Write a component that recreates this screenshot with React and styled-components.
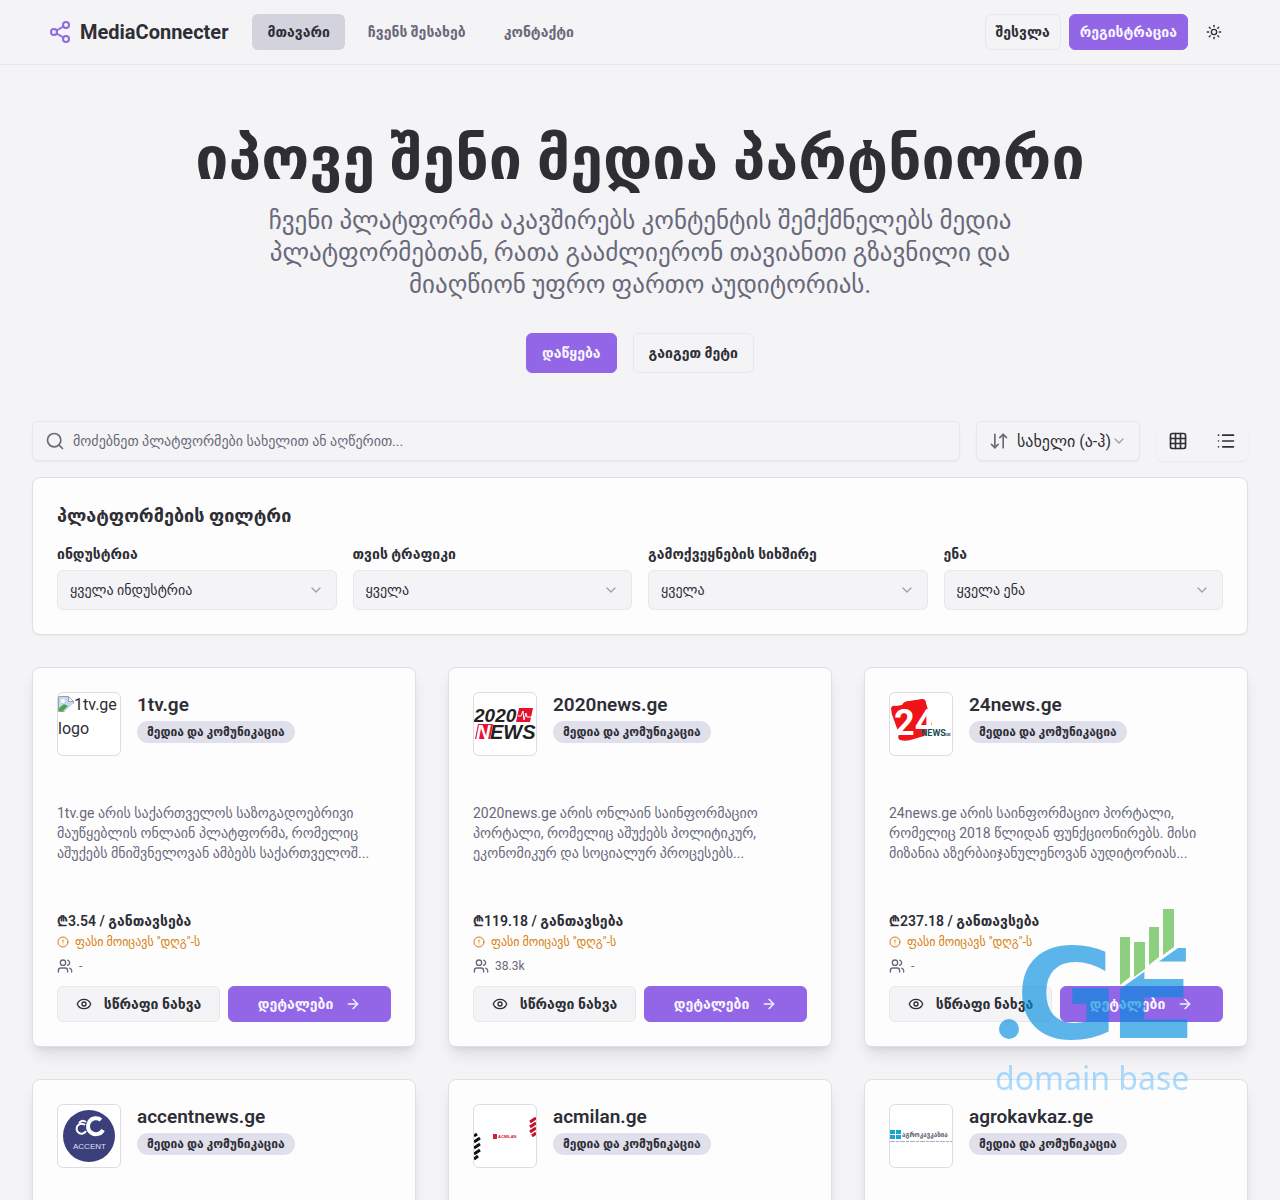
import React from 'react';
import styled, { createGlobalStyle, css } from 'styled-components';
import {
  Share2, Sun, Search, ArrowDownUp, ChevronDown, Grid3x3, List, Eye, ArrowRight, Users, CircleAlert,
} from 'lucide-react';

const c = {
  bg: '#f4f4f7',
  card: '#fdfdfe',
  line: '#e8e8ec',
  ink: '#2e2e35',
  muted: '#69697a',
  primary: '#9266e6',
  badge: '#e0e0ec',
  amber: '#d97f0b',
};

const Global = createGlobalStyle`
  *, *::before, *::after { box-sizing: border-box; }
  body { margin: 0; background: ${c.bg}; }
  body, button, input, select {
    font-family: Roboto, 'DejaVu Sans', sans-serif;
    color: ${c.ink};
  }
  h1, h2, h3, p { margin: 0; }
`;

const Page = styled.div`
  height: 100vh;
  overflow: hidden;
`;

const Header = styled.header`
  display: flex;
  align-items: center;
  height: 65px;
  padding: 0 48px;
  border-bottom: 1px solid ${c.line};
`;

const Brand = styled.a`
  display: flex;
  align-items: center;
  gap: 8px;
  margin-right: 24px;
  color: ${c.ink};
  font-size: 20px;
  font-weight: 700;
  line-height: 28px;
  text-decoration: none;
  svg { color: ${c.primary}; }
`;

const Nav = styled.nav`
  display: flex;
  gap: 8px;
  flex: 1;
`;

const NavLink = styled.a`
  display: flex;
  align-items: center;
  height: 36px;
  padding: 0 15px;
  border-radius: 6px;
  font-size: 14px;
  font-weight: 600;
  text-decoration: none;
  color: ${(p) => (p.$active ? c.ink : c.muted)};
  background: ${(p) => (p.$active ? '#d3d3de' : 'transparent')};
`;

const Actions = styled.div`
  display: flex;
  align-items: center;
  gap: 8px;
`;

const kinds = {
  primary: css`
    background: ${c.primary};
    border-color: ${c.primary};
    color: #f8f5ff;
  `,
  outline: css`
    background: ${c.bg};
    border-color: ${c.line};
  `,
  ghost: css`
    background: transparent;
    border-color: transparent;
  `,
};

const Button = styled.button`
  display: inline-flex;
  align-items: center;
  justify-content: center;
  gap: 12px;
  height: ${(p) => (p.$large ? 40 : 36)}px;
  padding: 0 ${(p) => (p.$large ? 15 : 10)}px;
  border: 1px solid;
  border-radius: 6px;
  font-size: 14px;
  font-weight: 600;
  white-space: nowrap;
  cursor: pointer;
  ${(p) => kinds[p.$kind]}
`;

const IconButton = styled(Button)`
  width: ${(p) => (p.$large ? 40 : 36)}px;
  padding: 0;
`;

const Hero = styled.section`
  display: flex;
  flex-direction: column;
  align-items: center;
  padding: 64px 32px 48px;
  text-align: center;
`;

const HeroTitle = styled.h1`
  font-size: 59px;
  font-weight: 700;
  line-height: 60px;
`;

const HeroText = styled.p`
  max-width: 768px;
  margin: 16px 0 32px;
  font-size: 25px;
  line-height: 32px;
  color: ${c.muted};
  white-space: pre-line;
`;

const HeroActions = styled.div`
  display: flex;
  gap: 16px;
`;

const Main = styled.main`
  padding: 0 32px;
`;

const Toolbar = styled.div`
  display: flex;
  gap: 16px;
  margin-bottom: 16px;
`;

const Field = styled.div`
  display: flex;
  align-items: center;
  height: 40px;
  padding: 0 12px;
  border: 1px solid ${c.line};
  border-radius: 6px;
  background: ${c.bg};
  box-shadow: ${(p) => (p.$raised ? '0 1px 2px rgba(0, 0, 0, 0.05)' : 'none')};
  flex: ${(p) => (p.$grow ? 1 : 'none')};
  > svg { flex: none; color: ${c.muted}; }
  > svg:first-child { margin-right: 8px; }
`;

const SearchInput = styled.input`
  flex: 1;
  min-width: 0;
  height: 100%;
  padding: 0;
  border: 0;
  outline: 0;
  background: transparent;
  font-size: 14px;
  &::placeholder { color: ${c.muted}; opacity: 1; }
`;

const SelectControl = styled.select`
  appearance: none;
  flex: 1;
  min-width: 0;
  height: 100%;
  padding: 0;
  border: 0;
  outline: 0;
  background: transparent;
  font-size: ${(p) => p.$size}px;
`;

const Chevron = styled(ChevronDown)`
  opacity: 0.6;
  pointer-events: none;
`;

const ViewToggle = styled.div`
  display: flex;
  gap: 8px;
  padding: 0 2px;
  border-radius: 6px;
  box-shadow: 0 1px 2px rgba(0, 0, 0, 0.05);
`;

const FilterPanel = styled.section`
  margin-bottom: 32px;
  padding: 24px;
  border: 1px solid #dfdfe5;
  border-radius: 8px;
  background: ${c.card};
  box-shadow: 0 1px 2px rgba(0, 0, 0, 0.05);
`;

const FilterTitle = styled.h2`
  margin-bottom: 16px;
  font-size: 18px;
  font-weight: 700;
  line-height: 28px;
`;

const FilterGrid = styled.div`
  display: grid;
  grid-template-columns: repeat(4, 1fr);
  gap: 16px;
`;

const FilterItem = styled.div`
  display: grid;
  gap: 8px;
`;

const FilterLabel = styled.label`
  font-size: 14px;
  font-weight: 600;
  line-height: 16px;
`;

const CardGrid = styled.div`
  display: grid;
  grid-template-columns: repeat(3, 1fr);
  gap: 32px;
`;

const Card = styled.article`
  display: flex;
  flex-direction: column;
  min-width: 0;
  min-height: 380px;
  padding: 24px;
  border: 1px solid #dfdfe5;
  border-radius: 8px;
  background: ${c.card};
  box-shadow: 0 10px 15px -3px rgba(0, 0, 0, 0.1), 0 4px 6px -4px rgba(0, 0, 0, 0.1);
`;

const CardHead = styled.div`
  display: flex;
  gap: 16px;
  margin-bottom: 47px;
`;

const LogoBox = styled.div`
  flex: none;
  width: 64px;
  height: 64px;
  overflow: hidden;
  border: 1px solid #dcdce2;
  border-radius: 6px;
  background: #fff;
  font-size: 16px;
  line-height: 24px;
  > svg { display: block; }
`;

const MissingImage = styled.span`
  svg { vertical-align: -2px; }
`;

const CardName = styled.h3`
  margin-bottom: 4px;
  font-size: 19px;
  font-weight: 600;
  line-height: 25px;
`;

const Badge = styled.span`
  display: flex;
  align-items: center;
  width: fit-content;
  height: 22px;
  padding: 0 10px;
  border-radius: 11px;
  background: ${c.badge};
  font-size: 12px;
  font-weight: 600;
  white-space: nowrap;
`;

const Description = styled.p`
  margin-bottom: 48px;
  font-size: 14px;
  line-height: 20px;
  color: ${c.muted};
  white-space: pre;
`;

const Price = styled.p`
  margin-bottom: 3px;
  font-size: 14px;
  font-weight: 600;
  line-height: 20px;
`;

const Meta = styled.p`
  display: flex;
  align-items: center;
  gap: 6px;
  margin-bottom: ${(p) => (p.$vat ? 8 : 12)}px;
  font-size: 12px;
  line-height: 16px;
  color: ${(p) => (p.$vat ? c.amber : c.muted)};
`;

const CardActions = styled.div`
  display: grid;
  grid-template-columns: 1fr 1fr;
  gap: 8px;
`;

const Watermark = styled.svg`
  position: fixed;
  right: 80px;
  bottom: 94px;
  pointer-events: none;
`;

function BrokenImage() {
  return (
    <MissingImage>
      <svg width="16" height="16" viewBox="0 0 16 16">
        <path d="M.5.5h10l5 5v10H.5z" fill="#c6d9f4" stroke="#9aa0a6" />
        <path d="M10.500.5v5h5z" fill="#fff" stroke="#9aa0a6" />
        <circle cx="5" cy="5" r="2" fill="#fff" />
        <path d="M1 15v-3l5-4 4 2-5 5z" fill="#4ca64c" />
        <path d="M6 16l10-9v9z" fill="#fff" />
      </svg>
      1tv.ge logo
    </MissingImage>
  );
}

const heavy = { fontFamily: 'Liberation Sans, sans-serif', fontWeight: 700 };

function News2020() {
  return (
    <svg width="62" height="62" viewBox="0 0 62 62" {...heavy} fontStyle="italic">
      <text x="0" y="29" fontSize="19" fill="#222">2020</text>
      <path d="M45 15h14l-3 14H42z" fill="#e4122d" />
      <path d="M44 23h3l2-5 1 9 2-7 1 4h4" fill="none" stroke="#fff" />
      <path d="M4 31h15l-3 15H1z" fill="#e4122d" />
      <text x="2" y="46" fontSize="20" fill="#fff">N</text>
      <text x="16" y="46" fontSize="20" fill="#222">EWS</text>
    </svg>
  );
}

function News24() {
  return (
    <svg width="62" height="62" viewBox="0 0 62 62" {...heavy}>
      <path d="M1 15q1-3 5-2l6-1q2-4 7-4l13-2q4 0 4 4l5 17 2 8-9 8-10 3q-8 3-14 1-3-2-1-6L4 27q-3-6-3-12z" fill="#f01418" />
      <text x="4" y="42" fontSize="36" fill="#fff" fontFamily="Roboto">24</text>
      <text x="31" y="43" fontSize="9" fill="#174e4d" fontFamily="Roboto">NEWS</text>
      <text x="55" y="43" fontSize="4" fill="#174e4d">GE</text>
    </svg>
  );
}

function Accent() {
  return (
    <svg width="62" height="62" viewBox="0 0 62 62" fontFamily="Liberation Sans, sans-serif">
      <circle cx="31" cy="31" r="26" fill="#3b3f7c" />
      <g fill="none" stroke="#fff">
        <path d="M27 20a5 5 0 1 0 1 6" strokeWidth="2" />
        <path d="M21 18q3-4 7-1" strokeWidth="2" />
        <path d="M43 15a8 8 0 1 0 2 10" strokeWidth="4" />
      </g>
      <text x="15" y="44" fontSize="8" fill="#dfe0f0">ACCENT</text>
    </svg>
  );
}

function AcMilan() {
  return (
    <svg width="62" height="62" viewBox="0 0 62 62" {...heavy}>
      <path d="M19 29h4v5h-4z" fill="#cf2038" />
      <text x="24" y="33" fontSize="4" fill="#cf2038">ACMILAN</text>
      <g fill="none" strokeWidth="3">
        <path d="M62 13l-6 4M62 18l-6 4M62 23l-6 4M62 28l-4 3" stroke="#c8102e" />
        <path d="M0 31l3-2M0 37l6-4M0 43l6-4M0 49l6-4M0 54l4-3" stroke="#111" />
      </g>
    </svg>
  );
}

function AgroKavkaz() {
  return (
    <svg width="62" height="62" viewBox="0 0 62 62">
      <path d="M0 25h5v4H0zM6 25h5v4H6zM0 30h5v4H0zM6 30h5v4H6z" fill="#1ba3d6" />
      <text x="12" y="32" fontSize="7" fontWeight="700" fontFamily="DejaVu Sans Condensed" fill="#59636c">აგროკავკასია</text>
      <path d="M0 36.500h62" stroke="#a9b0b5" strokeDasharray="5 1 3 1" />
    </svg>
  );
}

const filters = [
  ['industry', 'ინდუსტრია', 'ყველა ინდუსტრია'],
  ['traffic', 'თვის ტრაფიკი', 'ყველა'],
  ['frequency', 'გამოქვეყნების სიხშირე', 'ყველა'],
  ['language', 'ენა', 'ყველა ენა'],
];

const platforms = [
  {
    name: '1tv.ge',
    Logo: BrokenImage,
    text: '1tv.ge არის საქართველოს საზოგადოებრივი\nმაუწყებლის ონლაინ პლატფორმა, რომელიც\nაშუქებს მნიშვნელოვან ამბებს საქართველოშ...',
    price: '₾3.54',
    visitors: '-',
  },
  {
    name: '2020news.ge',
    Logo: News2020,
    text: '2020news.ge არის ონლაინ საინფორმაციო\nპორტალი, რომელიც აშუქებს პოლიტიკურ,\nეკონომიკურ და სოციალურ პროცესებს...',
    price: '₾119.18',
    visitors: '38.3k',
  },
  {
    name: '24news.ge',
    Logo: News24,
    text: '24news.ge არის საინფორმაციო პორტალი,\nრომელიც 2018 წლიდან ფუნქციონირებს. მისი\nმიზანია აზერბაიჯანულენოვან აუდიტორიას...',
    price: '₾237.18',
    visitors: '-',
  },
  { name: 'accentnews.ge', Logo: Accent },
  { name: 'acmilan.ge', Logo: AcMilan },
  { name: 'agrokavkaz.ge', Logo: AgroKavkaz },
];

function PlatformCard({ name, Logo, text, price, visitors }) {
  return (
    <Card>
      <CardHead>
        <LogoBox><Logo /></LogoBox>
        <div>
          <CardName>{name}</CardName>
          <Badge>მედია და კომუნიკაცია</Badge>
        </div>
      </CardHead>
      {text && (
        <>
          <Description>{text}</Description>
          <Price>{price} / განთავსება</Price>
          <Meta $vat><CircleAlert size={12} />ფასი მოიცავს "დღგ"-ს</Meta>
          <Meta><Users size={16} />{visitors}</Meta>
          <CardActions>
            <Button $kind="outline"><Eye size={16} />სწრაფი ნახვა</Button>
            <Button $kind="primary">დეტალები<ArrowRight size={16} /></Button>
          </CardActions>
        </>
      )}
    </Card>
  );
}

function DomainBase() {
  return (
    <Watermark width="210" height="200" viewBox="990 906 210 200">
      <defs>
        <clipPath id="below-trend">
          <path d="M1110 996L1178 948H1194V1045H1110z" />
        </clipPath>
      </defs>
      <g opacity="0.64" fill="#008bdf">
        <circle cx="1009" cy="1029" r="10" />
        <g fontFamily="DejaVu Sans" fontWeight="700">
          <text x="1016" y="1038" fontSize="124">G</text>
          <text x="1108" y="1038" fontSize="130" clipPath="url(#below-trend)">E</text>
        </g>
        <path
          fill="#4db838"
          d="M1120 937h10v40l-10 8zM1134 942h11v27l-11 8zM1149 927h10v30l-10 8zM1163 909h11v38l-11 8z"
        />
      </g>
      <text x="995" y="1090" fontFamily="Noto Sans" fontWeight="400" fontSize="32" fill="#5bbcff" opacity="0.5">
        domain base
      </text>
    </Watermark>
  );
}

export default function App() {
  return (
    <Page>
      <Global />
      <Header>
        <Brand href="#"><Share2 size={24} />MediaConnecter</Brand>
        <Nav>
          <NavLink href="#" $active>მთავარი</NavLink>
          <NavLink href="#about">ჩვენს შესახებ</NavLink>
          <NavLink href="#contact">კონტაქტი</NavLink>
        </Nav>
        <Actions>
          <Button $kind="outline">შესვლა</Button>
          <Button $kind="primary">რეგისტრაცია</Button>
          <IconButton $kind="ghost" aria-label="თემა"><Sun size={16} /></IconButton>
        </Actions>
      </Header>
      <Hero>
        <HeroTitle>იპოვე შენი მედია პარტნიორი</HeroTitle>
        <HeroText>
          {'ჩვენი პლატფორმა აკავშირებს კონტენტის შემქმნელებს მედია\nპლატფორმებთან, რათა გააძლიერონ თავიანთი გზავნილი და\nმიაღწიონ უფრო ფართო აუდიტორიას.'}
        </HeroText>
        <HeroActions>
          <Button $kind="primary" $large>დაწყება</Button>
          <Button $kind="outline" $large>გაიგეთ მეტი</Button>
        </HeroActions>
      </Hero>
      <Main>
        <Toolbar>
          <Field $grow $raised>
            <Search size={20} />
            <SearchInput aria-label="ძებნა" placeholder="მოძებნეთ პლატფორმები სახელით ან აღწერით..." />
          </Field>
          <Field $raised>
            <ArrowDownUp size={20} />
            <SelectControl $size={16} aria-label="დალაგება"><option>სახელი (ა-ჰ)</option></SelectControl>
            <Chevron size={16} />
          </Field>
          <ViewToggle>
            <IconButton $kind="ghost" $large aria-label="ბადე"><Grid3x3 size={20} /></IconButton>
            <IconButton $kind="ghost" $large aria-label="სია"><List size={20} /></IconButton>
          </ViewToggle>
        </Toolbar>
        <FilterPanel>
          <FilterTitle>პლატფორმების ფილტრი</FilterTitle>
          <FilterGrid>
            {filters.map(([id, label, value]) => (
              <FilterItem key={id}>
                <FilterLabel htmlFor={id}>{label}</FilterLabel>
                <Field>
                  <SelectControl id={id} $size={14}><option>{value}</option></SelectControl>
                  <Chevron size={16} />
                </Field>
              </FilterItem>
            ))}
          </FilterGrid>
        </FilterPanel>
        <CardGrid>
          {platforms.map((p) => <PlatformCard key={p.name} {...p} />)}
        </CardGrid>
      </Main>
      <DomainBase />
    </Page>
  );
}
